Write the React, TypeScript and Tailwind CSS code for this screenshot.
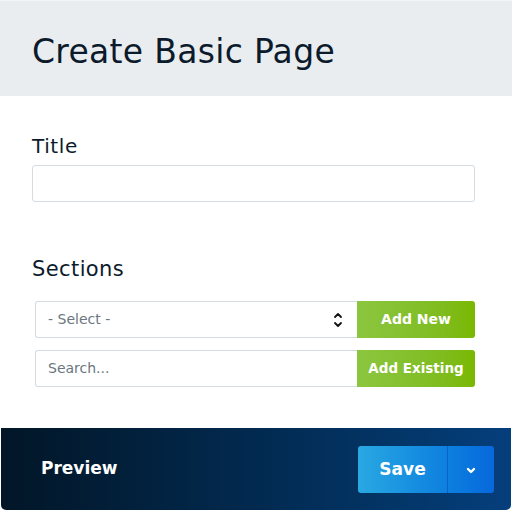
import React from 'react';

const font = { fontFamily: '"DejaVu Sans", "Open Sans", sans-serif' };

const ChevronUpDown: React.FC = () => (
  <svg width="10" height="16" viewBox="0 0 10 16" fill="none" stroke="#111" strokeWidth="1.8" strokeLinecap="round" strokeLinejoin="round">
    <path d="M2 5l3-3 3 3" />
    <path d="M2 11l3 3 3-3" />
  </svg>
);

const ChevronDown: React.FC = () => (
  <svg width="10" height="7" viewBox="0 0 10 7" fill="none" stroke="#fff" strokeWidth="2.4" strokeLinecap="round" strokeLinejoin="round">
    <path d="M2 2l3 3 3-3" />
  </svg>
);

const App: React.FC = () => {
  return (
    <div className="w-[512px] h-[512px] bg-white flex flex-col text-[#0d1b2a]" style={font}>
      <div className="h-[96px] bg-[#e9edf0] flex items-center px-8 border-t border-[#f2f4f6]">
        <h1 className="text-[33px] leading-none text-[#0c1b2b] tracking-[0.3px] pt-[6px]">Create Basic Page</h1>
      </div>

      <div className="px-8 pt-[40px]">
        <label className="block text-[20px] leading-none text-[#0c1b2b] tracking-[0.6px] mb-[9px]">Title</label>
        <input className="w-[443px] h-[37px] border border-[#d5dce1] rounded-[3px] outline-none px-3" />

        <label className="block text-[21px] leading-none text-[#0c1b2b] tracking-[0.4px] mt-[57px] mb-[21px]">Sections</label>
        <div className="ml-[3px] w-[440px] flex flex-col gap-[12px]">
          <div className="flex h-[37px]">
            <div className="flex-1 flex items-center justify-between border border-[#d5dce1] border-r-0 rounded-l-[3px] pl-3 pr-[14px]">
              <span className="text-[14px] text-[#6b7780]">- Select -</span>
              <ChevronUpDown />
            </div>
            <button className="w-[118px] bg-gradient-to-r from-[#8cc63f] to-[#7ab800] text-white text-[14px] font-bold rounded-r-[3px]">Add New</button>
          </div>
          <div className="flex h-[37px]">
            <div className="flex-1 flex items-center border border-[#d5dce1] border-r-0 rounded-l-[3px] pl-3">
              <span className="text-[14px] text-[#6b7780]">Search...</span>
            </div>
            <button className="w-[118px] bg-gradient-to-r from-[#8cc63f] to-[#7ab800] text-white text-[13.5px] font-bold rounded-r-[3px] whitespace-nowrap">Add Existing</button>
          </div>
        </div>
      </div>

      <div className="mt-auto mb-[2px] mx-[1px] h-[82px] rounded-b-[5px] bg-gradient-to-r from-[#021627] via-[#022a50] to-[#053f7c] flex items-center justify-between pl-[40px] pr-[17px]">
        <span className="text-white font-bold text-[17px]">Preview</span>
        <div className="flex h-[47px] w-[136px] rounded-[3px] overflow-hidden bg-gradient-to-r from-[#29a8e2] to-[#0868dc]">
          <button className="w-[90px] text-white font-bold text-[17px] pt-[2px] border-r border-[#0c63c4]">Save</button>
          <button className="flex-1 flex items-center justify-center pt-[2px]"><ChevronDown /></button>
        </div>
      </div>
    </div>
  );
};

export default App;
